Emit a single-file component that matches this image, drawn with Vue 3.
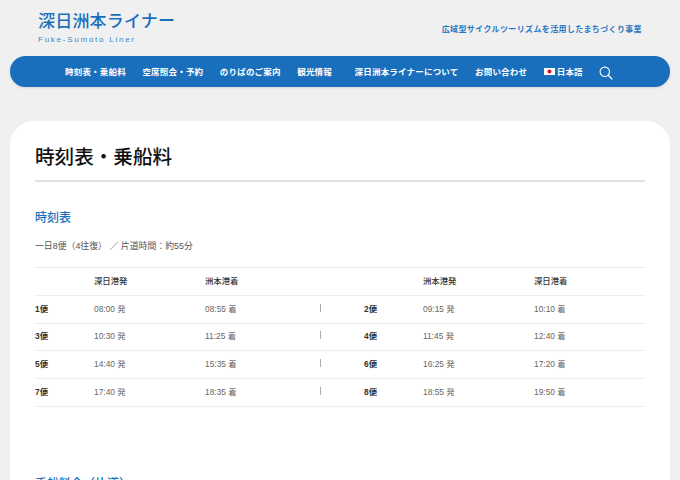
<template>
  <div class="page">
    <header class="site-header">
      <div class="logo">
        <div class="logo-title">深日洲本ライナー</div>
        <div class="logo-sub">Fuke-Sumoto Liner</div>
      </div>
      <p class="tagline">広域型サイクルツーリズムを活用したまちづくり事業</p>
    </header>

    <nav class="nav">
      <a v-for="item in navItems" :key="item" class="nav-item">{{ item }}</a>
      <a class="nav-item nav-about">深日洲本ライナーについて</a>
      <a class="nav-item">お問い合わせ</a>
      <a class="nav-item lang">
        <svg class="flag" viewBox="0 0 11 7" width="11" height="7">
          <rect width="11" height="7" fill="#fff" />
          <circle cx="5.5" cy="3.5" r="2" fill="#d8121f" />
        </svg>
        日本語
      </a>
      <svg class="search" viewBox="0 0 14 14" width="14" height="14">
        <circle cx="5.8" cy="5.8" r="4.7" fill="none" stroke="#fff" stroke-width="1.1" />
        <path d="M9.2 9.2 13.4 13.4" stroke="#fff" stroke-width="1.3" fill="none" />
      </svg>
    </nav>

    <main class="card">
      <h1 class="page-title">時刻表・乗船料</h1>

      <h2 class="section-title">時刻表</h2>
      <p class="lead">一日8便（4往復） ／ 片道時間：約55分</p>

      <table class="timetable">
        <colgroup>
          <col class="c-no" /><col class="c-time" /><col class="c-time" />
          <col class="c-sep" />
          <col class="c-no" /><col class="c-time" /><col class="c-time" />
        </colgroup>
        <thead>
          <tr>
            <th></th><th>深日港発</th><th>洲本港着</th>
            <th></th>
            <th></th><th>洲本港発</th><th>深日港着</th>
          </tr>
        </thead>
        <tbody>
          <tr v-for="row in rows" :key="row[0]">
            <td class="no">{{ row[0] }}便</td>
            <td>{{ row[1] }} 発</td>
            <td>{{ row[2] }} 着</td>
            <td class="sep"><span class="sep-mark"></span></td>
            <td class="no">{{ row[3] }}便</td>
            <td>{{ row[4] }} 発</td>
            <td>{{ row[5] }} 着</td>
          </tr>
        </tbody>
      </table>

      <h2 class="section-title fare">乗船料金（片道）</h2>
    </main>
  </div>
</template>

<script setup>
const navItems = ['時刻表・乗船料', '空席照会・予約', 'のりばのご案内', '観光情報']

const rows = [
  [1, '08:00', '08:55', 2, '09:15', '10:10'],
  [3, '10:30', '11:25', 4, '11:45', '12:40'],
  [5, '14:40', '15:35', 6, '16:25', '17:20'],
  [7, '17:40', '18:35', 8, '18:55', '19:50']
]
</script>

<style>
html, body {
  height: 480px;
  overflow: hidden;
  background: #f0f0f0;
}
</style>

<style scoped>
.page {
  height: 480px;
  overflow: hidden;
  padding: 0 10px;
  box-sizing: border-box;
  font-family: "Liberation Sans", "Noto Sans CJK JP", sans-serif;
  color: #333;
}

.site-header {
  height: 56px;
  padding: 0 28px;
  display: flex;
  justify-content: space-between;
}

.logo-title {
  margin-top: 11px;
  font-size: 17px;
  line-height: 22px;
  font-weight: 500;
  letter-spacing: 0.2px;
  color: #1a6fbd;
}

.logo-sub {
  margin-top: 2px;
  font-size: 8px;
  line-height: 10px;
  letter-spacing: 1.75px;
  color: #3f86c7;
}

.tagline {
  margin: 24px 0 0;
  font-size: 8px;
  line-height: 12px;
  font-weight: 700;
  letter-spacing: 0.37px;
  color: #2b78c2;
}

.nav {
  height: 31px;
  display: flex;
  align-items: center;
  gap: 16.5px;
  padding-left: 55px;
  background: #1a6fbd;
  border-radius: 16px;
  box-shadow: 0 1px 3px rgba(0, 0, 0, 0.1);
}

.nav-item {
  font-size: 8.5px;
  line-height: 12px;
  font-weight: 700;
  letter-spacing: 0.2px;
  color: #fff;
  white-space: nowrap;
}

.nav-about {
  margin-left: 6px;
}

.lang {
  display: flex;
  align-items: center;
  gap: 2px;
}

.search {
  margin-top: 2px;
}

.card {
  margin-top: 34px;
  padding: 23px 25px 40px;
  background: #fff;
  border-radius: 24px 24px 0 0;
}

.page-title {
  margin: 0;
  padding-bottom: 10px;
  font-size: 19.6px;
  line-height: 26px;
  font-weight: 500;
  color: #111;
  border-bottom: 2px solid #e2e2e2;
}

.section-title {
  margin: 27px 0 0;
  font-size: 12px;
  line-height: 18px;
  font-weight: 500;
  color: #1a6fbd;
}

.lead {
  margin: 12px 0 0;
  font-size: 8.9px;
  line-height: 14px;
  color: #555;
}

.timetable {
  width: 610px;
  margin-top: 14px;
  table-layout: fixed;
  border-collapse: collapse;
  font-size: 8.4px;
}

.c-no { width: 59px; }
.c-time { width: 111px; }
.c-sep { width: 48px; }

th, td {
  height: 23.8px;
  padding: 0 0 3px;
  text-align: left;
  border-top: 1px solid #eee;
  border-bottom: 1px solid #eee;
}

th {
  font-weight: 500;
  color: #333;
}

td {
  color: #666;
}

.no {
  font-weight: 700;
  color: #333;
}

.sep-mark {
  display: block;
  width: 1px;
  height: 8px;
  margin-left: 4px;
  background: #aaa;
}

.fare {
  margin-top: 68px;
}
</style>
